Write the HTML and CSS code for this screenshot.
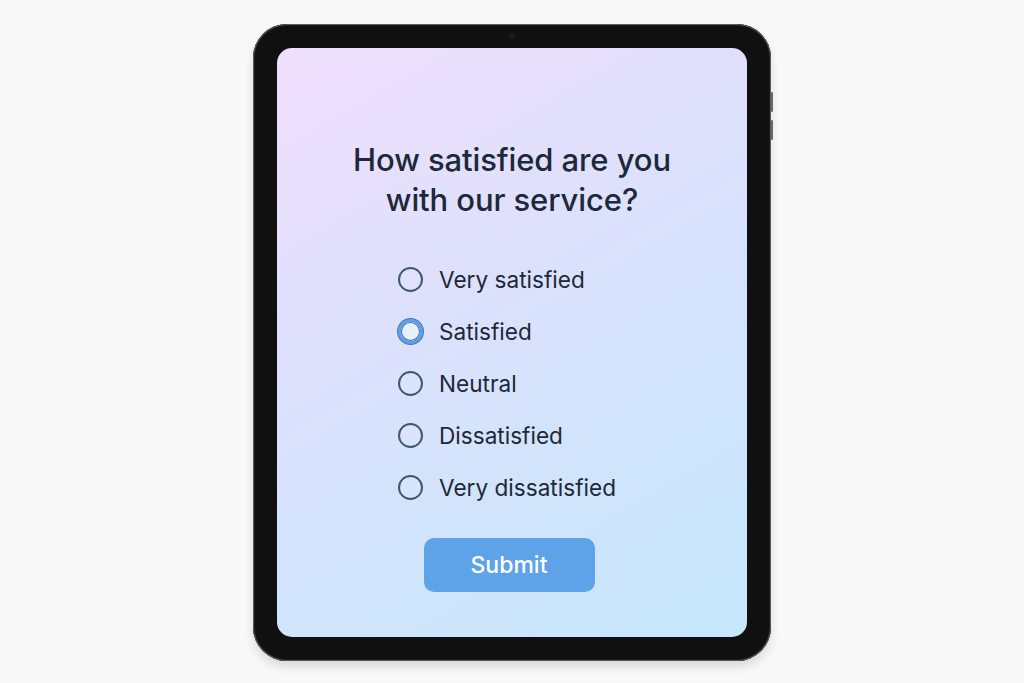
FILE: index.html
```html
<!DOCTYPE html>
<html>
<head>
<meta charset="utf-8">
<link rel="stylesheet" href="styles.css">
</head>
<body>
<div class="stage">
  <div class="tablet">
    <div class="camera"></div>
    <div class="btn-side btn-a"></div>
    <div class="btn-side btn-b"></div>
    <div class="screen">
      <h1 class="title">How satisfied are you<br>with our service?</h1>
      <div class="options">
        <label class="option"><span class="radio"></span><span class="label">Very satisfied</span></label>
        <label class="option"><span class="radio checked"></span><span class="label">Satisfied</span></label>
        <label class="option"><span class="radio"></span><span class="label">Neutral</span></label>
        <label class="option"><span class="radio"></span><span class="label">Dissatisfied</span></label>
        <label class="option"><span class="radio"></span><span class="label">Very dissatisfied</span></label>
      </div>
      <button class="submit">Submit</button>
    </div>
  </div>
</div>
</body>
</html>
```

FILE: styles.css
```css
html, body {
  margin: 0;
  padding: 0;
  background: #f8f8f8;
  font-family: Inter, "Open Sans", sans-serif;
}
.stage {
  width: 1024px;
  height: 683px;
  display: flex;
  justify-content: center;
  align-items: flex-start;
  padding-top: 24px;
  box-sizing: border-box;
}
.tablet {
  position: relative;
  width: 518px;
  height: 637px;
  padding: 24px;
  box-sizing: border-box;
  background: #101010;
  border-radius: 34px;
  box-shadow: inset 0 0 0 1px #5a5a5a, inset 0 0 0 2px #1a1a1a, 0 6px 10px rgba(0,0,0,0.12);
}
.camera {
  position: absolute;
  top: 9px;
  left: 50%;
  width: 6px;
  height: 6px;
  margin-left: -3px;
  border-radius: 50%;
  background: #1c1c1e;
}
.btn-side {
  position: absolute;
  right: -2px;
  width: 2px;
  background: #6a6a6a;
  border-radius: 1px;
}
.btn-a { top: 68px; height: 20px; }
.btn-b { top: 96px; height: 20px; }
.screen {
  width: 100%;
  height: 100%;
  border-radius: 15px;
  background: linear-gradient(150deg, #f0dffd 0%, #dfe0fc 35%, #d2e4fc 65%, #c5e7fb 100%);
  display: flex;
  flex-direction: column;
  align-items: center;
  padding-top: 92px;
  box-sizing: border-box;
}
.title {
  margin: 0;
  font-size: 31px;
  line-height: 40px;
  font-weight: 500;
  color: #1d2839;
  text-align: center;
  letter-spacing: -0.1px;
}
.options {
  margin-top: 33px;
  display: flex;
  flex-direction: column;
  align-self: flex-start;
  margin-left: 121px;
}
.option {
  height: 52px;
  display: flex;
  align-items: center;
  gap: 16px;
}
.radio {
  width: 25px;
  height: 25px;
  box-sizing: border-box;
  border-radius: 50%;
  border: 2px solid #3f5873;
  background: rgba(255,255,255,0.08);
}
.radio.checked {
  border: 3px solid #62a0ea;
  background: #e8f0fb;
  box-shadow: inset 0 0 0 1px #3568ad, 0 0 0 1px #4677b8;
}
.label {
  font-size: 22.6px;
  color: #1d2839;
}
.submit {
  margin-top: 25px;
  margin-right: 6px;
  width: 171px;
  height: 54px;
  border: none;
  border-radius: 10px;
  background: #5ea3e7;
  color: #ffffff;
  font-family: Inter, "Open Sans", sans-serif;
  font-size: 23px;
  font-weight: 500;
}
```
